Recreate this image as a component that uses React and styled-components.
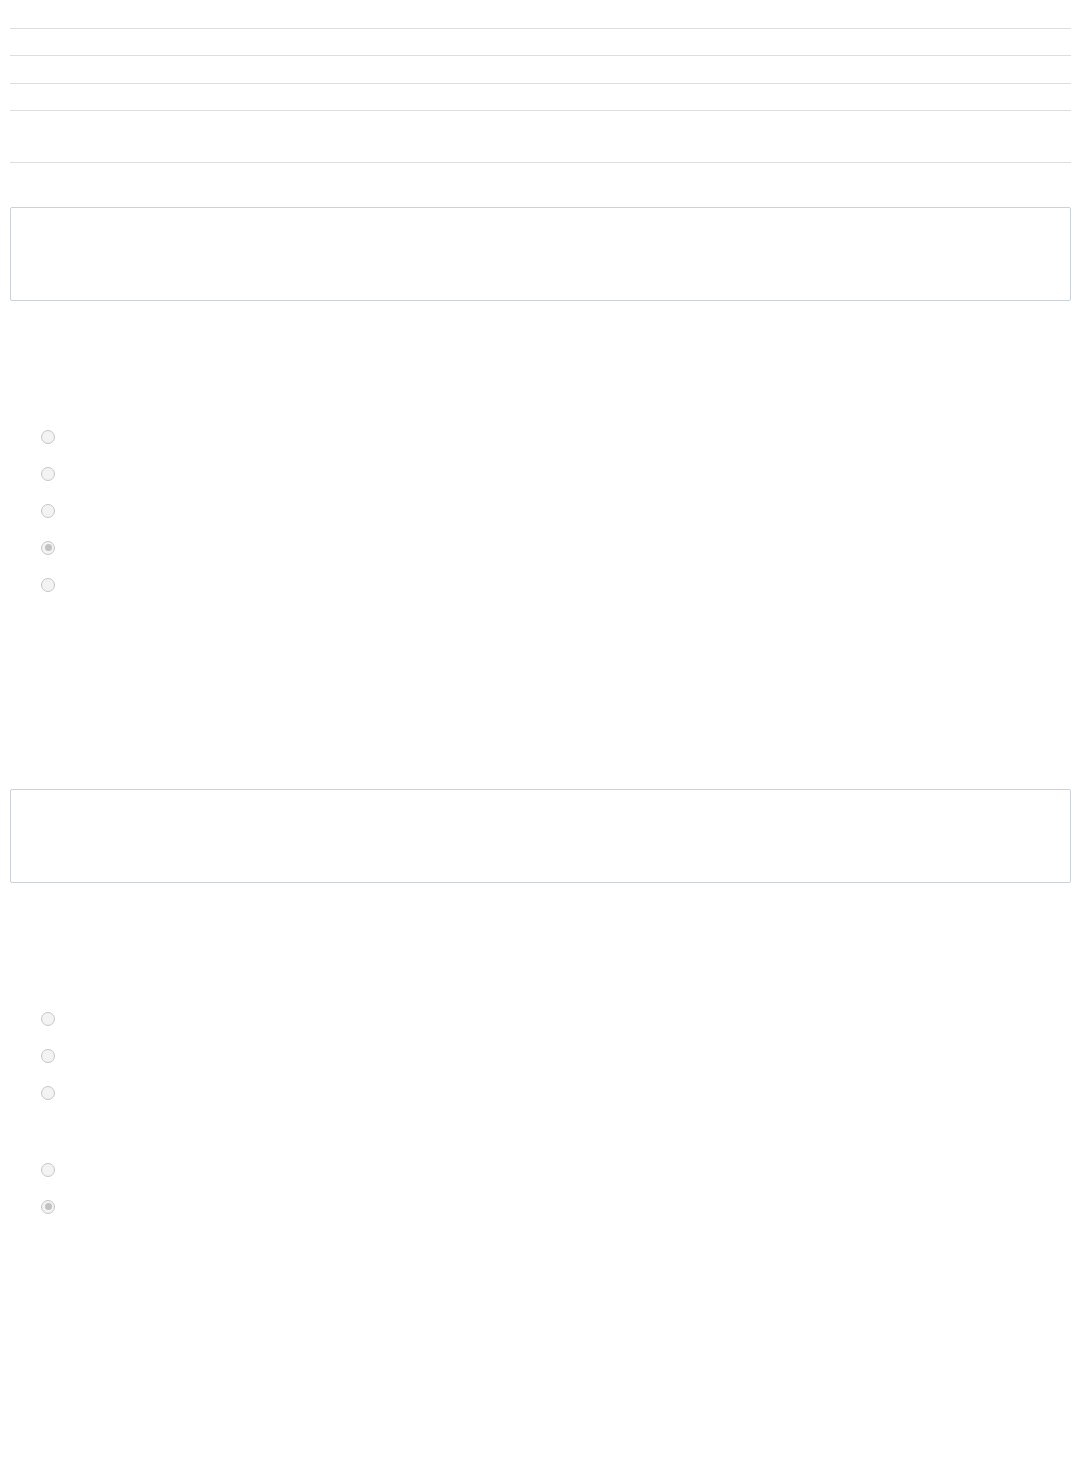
import React from 'react';
import styled, { createGlobalStyle } from 'styled-components';

const GlobalStyle = createGlobalStyle`
  html, body {
    margin: 0;
    padding: 0;
    background: #ffffff;
    font-family: "Liberation Sans", Arial, sans-serif;
  }
`;

const Page = styled.div`
  padding: 0 8px 0 10px;
  min-height: 1480px;
  box-sizing: border-box;
`;

const RowList = styled.div`
  display: flex;
  flex-direction: column;
`;

const Row = styled.div`
  height: ${(p) => p.$h}px;
  border-bottom: 1px solid #dedede;
`;

const TextBox = styled.div`
  margin-top: ${(p) => p.$top}px;
  height: 94px;
  box-sizing: border-box;
  border: 1px solid #cbd1d9;
  border-radius: 2px;
  background: #ffffff;
`;

const RadioGroup = styled.div`
  margin-top: ${(p) => p.$top}px;
  display: flex;
  flex-direction: column;
`;

const Option = styled.label`
  height: ${(p) => p.$h || 37}px;
  display: flex;
  align-items: center;
  padding-left: 31px;
`;

const Spacer = styled.div`
  height: ${(p) => p.$h}px;
`;

const Radio = styled.span`
  width: 14px;
  height: 14px;
  box-sizing: border-box;
  border-radius: 50%;
  border: 1.5px solid #c6c6c6;
  background: #f3f3f3;
  display: flex;
  align-items: center;
  justify-content: center;

  &::after {
    content: '';
    display: ${(p) => (p.$checked ? 'block' : 'none')};
    width: 7px;
    height: 7px;
    border-radius: 50%;
    background: #c2c2c2;
  }
`;

const rows = [28, 26, 27, 26, 51];

const groupOne = [false, false, false, true, false];

export default function App() {
  return (
    <Page>
      <GlobalStyle />
      <RowList>
        {rows.map((h, i) => (
          <Row key={i} $h={h} />
        ))}
      </RowList>

      <TextBox $top={44} />

      <RadioGroup $top={118}>
        {groupOne.map((c, i) => (
          <Option key={i} $h={i === 0 ? 36 : 37}>
            <Radio $checked={c} />
          </Option>
        ))}
      </RadioGroup>

      <TextBox $top={186} />

      <RadioGroup $top={117}>
        <Option><Radio /></Option>
        <Option><Radio /></Option>
        <Option><Radio /></Option>
        <Spacer $h={40} />
        <Option><Radio /></Option>
        <Option><Radio $checked /></Option>
      </RadioGroup>
    </Page>
  );
}
